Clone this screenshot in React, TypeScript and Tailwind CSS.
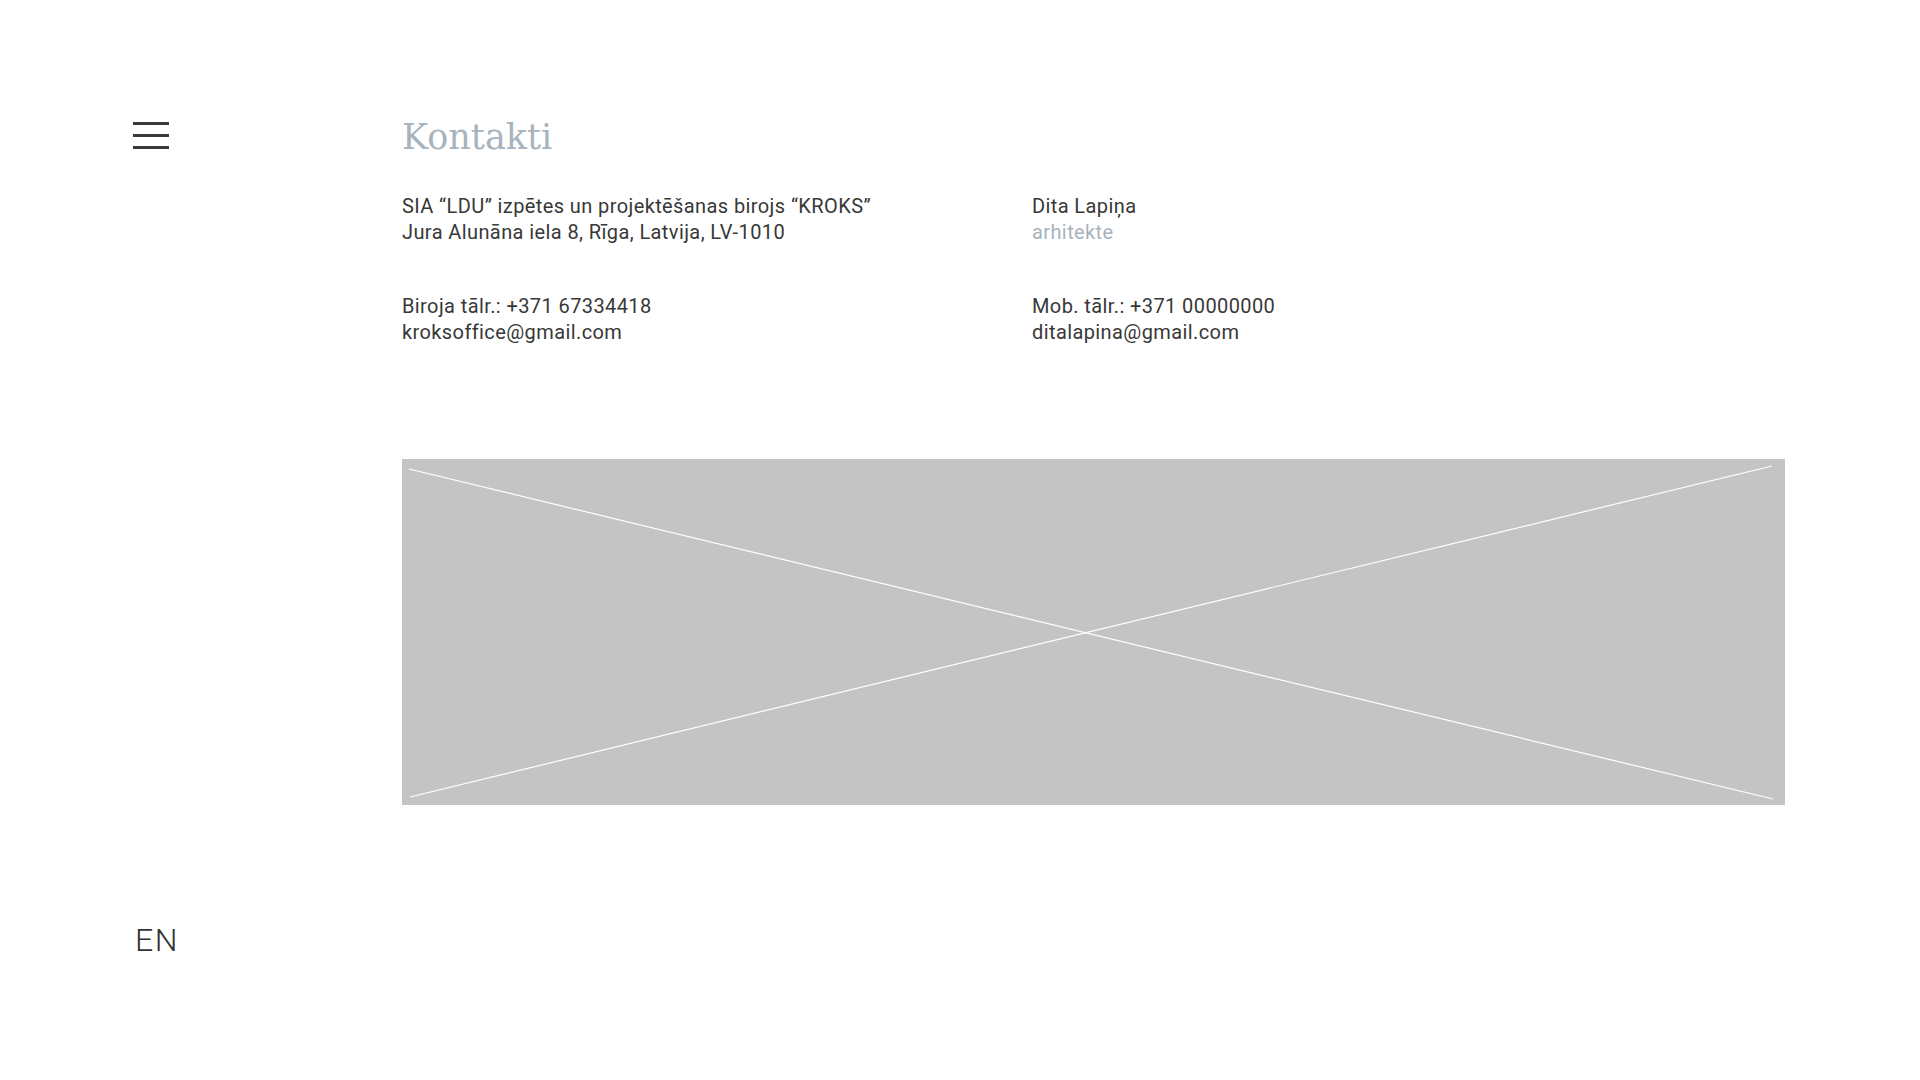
import React from "react";

const body = { fontFamily: "Roboto, 'Liberation Sans', sans-serif" };

export default function App() {
  return (
    <div className="flex h-[1080px] w-full bg-white text-[#333333]" style={body}>
      <aside className="flex w-[402px] shrink-0 flex-col justify-between pl-[133px] pt-[122px] pb-[122px]">
        <button className="flex w-[36px] flex-col gap-[9px]" aria-label="menu">
          <span className="block h-[3px] w-[36px] bg-[#3a3a3a]" />
          <span className="block h-[3px] w-[36px] bg-[#3a3a3a]" />
          <span className="block h-[3px] w-[36px] bg-[#3a3a3a]" />
        </button>
        <div className="pl-[2px] text-[32px] font-light leading-[36px] tracking-[1.5px] text-[#333333]">EN</div>
      </aside>
      <main className="flex flex-1 flex-col pt-[118px] pr-[135px]">
        <h1
          className="text-[35px] leading-[38px] text-[#a7b3bd]"
          style={{ fontFamily: "'DejaVu Serif', 'Liberation Serif', serif" }}
        >
          Kontakti
        </h1>
        <div className="mt-[37px] grid grid-cols-[630px_1fr] text-[20px] leading-[26px] tracking-[0.4px] text-[#383838]">
          <div>
            <p>SIA “LDU” izpētes un projektēšanas birojs “KROKS”</p>
            <p>Jura Alunāna iela 8, Rīga, Latvija, LV-1010</p>
          </div>
          <div>
            <p>Dita Lapiņa</p>
            <p className="text-[#a7b3bd]">arhitekte</p>
          </div>
          <div className="mt-[48px]">
            <p>Biroja tālr.: +371 67334418</p>
            <p>kroksoffice@gmail.com</p>
          </div>
          <div className="mt-[48px]">
            <p>Mob. tālr.: +371 00000000</p>
            <p>ditalapina@gmail.com</p>
          </div>
        </div>
        <div className="mt-[114px] h-[346px] w-[1383px] bg-[#c4c4c4]">
          <svg width="1383" height="346" viewBox="0 0 1383 346" className="block">
            <line x1="7" y1="10" x2="1371" y2="340" stroke="#ffffff" strokeWidth="1.2" />
            <line x1="8" y1="338" x2="1370" y2="7" stroke="#ffffff" strokeWidth="1.2" />
          </svg>
        </div>
      </main>
    </div>
  );
}
